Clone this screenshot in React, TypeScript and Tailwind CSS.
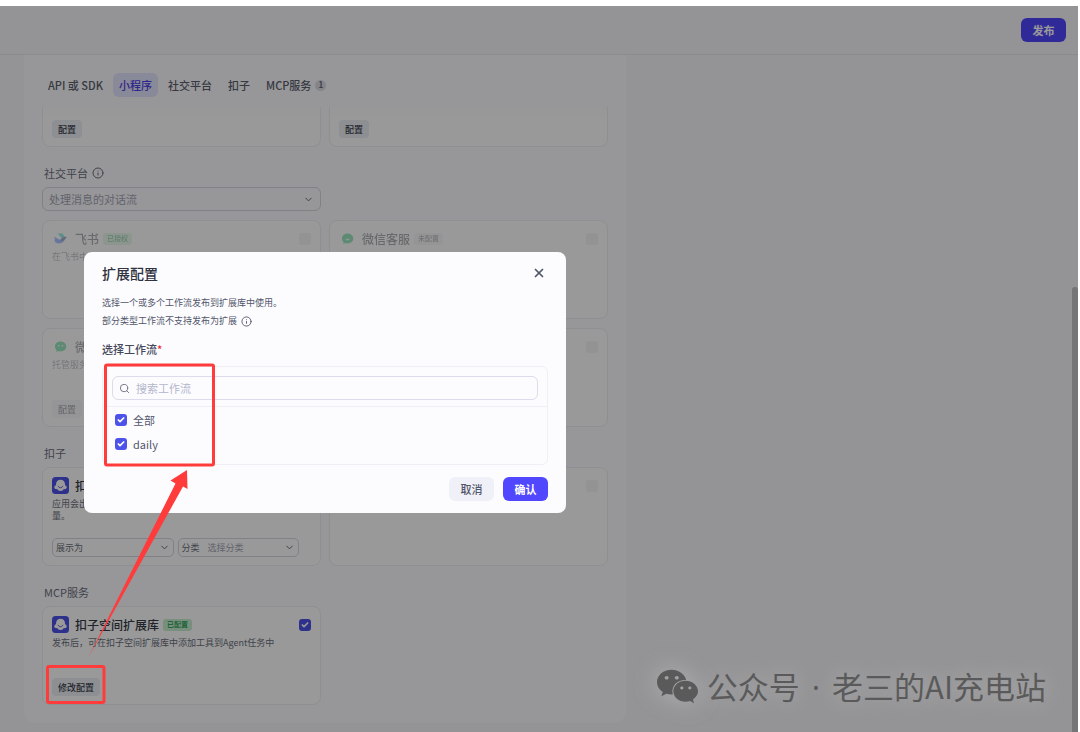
import { useState } from "react";
import type { ReactNode } from "react";
import { Check, ChevronDown, Info, Search, X } from "lucide-react";
import { FaWeixin } from "react-icons/fa";
import clsx from "clsx";

const TABS = [
  { id: "api", label: "API 或 SDK" },
  { id: "mini", label: "小程序" },
  { id: "social", label: "社交平台" },
  { id: "coze", label: "扣子" },
  { id: "mcp", label: "MCP服务", count: 1 },
];

const WORKFLOWS = ["daily"];

function CozeLogo() {
  return (
    <svg viewBox="0 0 34 34" className="size-[17px] shrink-0" aria-hidden="true">
      <rect width="34" height="34" rx="7" fill="#4d53e8" />
      <g fill="#fff">
        <path d="M17 5.500c-5.200 0-9 3.900-9 9V21h18v-6.500c0-5.100-3.800-9-9-9z" />
        <circle cx="8.500" cy="20.500" r="3.800" />
        <circle cx="25.500" cy="20.500" r="3.800" />
        <ellipse cx="17" cy="22.500" rx="6.500" ry="5.500" />
      </g>
      <path d="M12.500 18.500c1.500 4.200 7.500 4.200 9 0" fill="none" stroke="#4d53e8" strokeWidth="2" strokeLinecap="round" />
    </svg>
  );
}

function FeishuLogo() {
  return (
    <svg viewBox="0 0 34 34" className="size-[17px] shrink-0" aria-hidden="true">
      <path d="M11 7h10c2 2 3.400 4.500 4 7.500-2 .6-4 1.700-5.500 3.300C17 13.500 14.500 10 11 7z" fill="#00d6b9" />
      <path d="M5.500 13v10.500c5.500 5 15.500 5 20.500-5C18.500 22 12 19.500 5.500 13z" fill="#3370ff" />
      <path d="M29.500 14.200c-3.800-1.200-7.300-.2-10 2.700l-4 3.700C20 22.800 24 21.500 26 18.500z" fill="#133c9a" />
    </svg>
  );
}

function ServiceLogo({ smile = false }: { smile?: boolean }) {
  return (
    <svg viewBox="0 0 34 34" className="size-[17px] shrink-0" aria-hidden="true">
      <path d="M17 7C10.500 7 6 11.300 6 17c0 3 1.300 5.500 3.200 7.200L8.500 28l4-2c1.400.5 3 .8 4.500.8 6.500 0 11.500-4.100 11.500-9.800S23.500 7 17 7z" fill="#07c160" />
      {smile ? (
        <path d="M13.500 18.500c1.800 2 5.200 2 7 0z" fill="#fff" stroke="#fff" strokeWidth="1.500" strokeLinejoin="round" />
      ) : (
        <>
          <circle cx="13.500" cy="15.500" r="1.700" fill="#fff" />
          <circle cx="21" cy="15.500" r="1.700" fill="#fff" />
        </>
      )}
    </svg>
  );
}

interface TickProps {
  label: string;
  checked?: boolean;
  disabled?: boolean;
  onChange?: (checked: boolean) => void;
}

function Tick({ label, checked = false, disabled = false, onChange }: TickProps) {
  return (
    <span className="grid size-3 shrink-0">
      <input
        type="checkbox"
        aria-label={label}
        checked={checked}
        disabled={disabled}
        onChange={e => onChange?.(e.target.checked)}
        className="peer col-start-1 row-start-1 size-3 appearance-none rounded-[3px] bg-[#e6e6eb] checked:bg-[#4d53e8]"
      />
      <Check
        size={8}
        strokeWidth={5}
        className="pointer-events-none invisible col-start-1 row-start-1 place-self-center text-white peer-checked:visible"
      />
    </span>
  );
}

function Tag({ tone, children }: { tone: "green" | "gray"; children: ReactNode }) {
  return (
    <span
      className={clsx(
        "flex h-3 items-center rounded-[3px] px-1 text-[7px] font-medium whitespace-nowrap",
        tone === "green" ? "bg-[#c9efd3] text-[#159a4a]" : "bg-[#f0f0f5] text-[#5b5f6e]"
      )}
    >
      {children}
    </span>
  );
}

function SmallButton({ children, disabled }: { children: ReactNode; disabled?: boolean }) {
  return (
    <button
      type="button"
      disabled={disabled}
      className="h-[18px] rounded-sm bg-[#eceef6] px-1.5 text-[9px] leading-none font-medium text-[#383b48]"
    >
      {children}
    </button>
  );
}

interface DropdownProps {
  label: string;
  prefix?: string;
  text: string;
  muted?: boolean;
  large?: boolean;
}

function Dropdown({ label, prefix, text, muted, large }: DropdownProps) {
  return (
    <label
      className={clsx(
        "flex w-full min-w-0 items-center border border-[#d6d7e2] text-[#6b6f7d]",
        large ? "h-6 rounded-md px-1.5 text-[11px]" : "h-[19px] rounded-[5px] px-[3px] text-[9px]"
      )}
    >
      {prefix && <span className="mr-2 shrink-0">{prefix}</span>}
      <select
        aria-label={label}
        className={clsx("w-0 min-w-0 flex-1 appearance-none bg-transparent leading-none outline-none", muted && "text-[#a3a6b5]")}
      >
        <option>{text}</option>
      </select>
      <ChevronDown size={11} className="shrink-0 text-[#5b5f6e]" />
    </label>
  );
}

interface ChannelCardProps {
  icon?: ReactNode;
  title: string;
  tag?: ReactNode;
  desc?: ReactNode;
  checked?: boolean;
  disabled?: boolean;
  onCheck?: (checked: boolean) => void;
  children?: ReactNode;
}

function ChannelCard({ icon, title, tag, desc, checked, disabled, onCheck, children }: ChannelCardProps) {
  return (
    <article className="h-[99px] min-w-0 rounded-lg border border-[#efeff5] bg-white">
      <div className={clsx("flex h-full flex-col px-[9px] pt-[9px] pb-2", disabled && "opacity-40")}>
        <div className="flex items-center">
          {icon}
          <h3 className="mr-1 ml-1.5 text-[12px] leading-[17px] font-medium whitespace-nowrap text-[#383b48]">{title}</h3>
          {tag}
          <span className="ml-auto flex">
            <Tick label={title} checked={checked} disabled={disabled} onChange={onCheck} />
          </span>
        </div>
        <p className="mt-1 text-[9px] leading-3 whitespace-nowrap text-[#6b6f7d]">{desc}</p>
        <div className="mt-auto">{children}</div>
      </div>
    </article>
  );
}

function SectionLabel({ children }: { children: ReactNode }) {
  return <h2 className="flex h-10 items-center gap-1 px-0.5 pt-3 text-[11px] text-[#6b6f7d]">{children}</h2>;
}

function PublishPanel() {
  const [tab, setTab] = useState("mini");
  const [mcp, setMcp] = useState(true);

  return (
    <section className="ml-6 w-full max-w-[602px] rounded-b-xl bg-[#fcfcff] px-[18px] pt-[18px] pb-[18px]">
      <nav className="flex h-6 items-center text-[11px] font-medium text-[#5b5f6e]">
        {TABS.map(t => (
          <button
            key={t.id}
            type="button"
            onClick={() => setTab(t.id)}
            className={clsx(
              "mr-1 flex h-6 items-center gap-1 rounded-md px-1.5 whitespace-nowrap",
              tab === t.id && "bg-[#e3e4ff] text-[#4e40e5]"
            )}
          >
            {t.label}
            {t.count && (
              <span className="flex size-[11px] items-center justify-center rounded-full bg-[#dcdde8] text-[9px]">{t.count}</span>
            )}
          </button>
        ))}
      </nav>

      <div className="mt-2.5 grid grid-cols-2 gap-2">
        {[0, 1].map(n => (
          <div
            key={n}
            className="flex h-10 items-end rounded-b-lg border border-t-0 border-[#efeff5] bg-linear-to-b from-[#fcfcff] to-white to-30% px-[9px] pb-2"
          >
            <SmallButton>配置</SmallButton>
          </div>
        ))}
      </div>

      <SectionLabel>
        社交平台 <Info size={12} />
      </SectionLabel>
      <div className="grid grid-cols-2 gap-2">
        <Dropdown large muted label="处理消息的对话流" text="处理消息的对话流" />
      </div>
      <div className="mt-[9px] grid grid-cols-2 gap-x-2 gap-y-[9px]">
        <ChannelCard disabled icon={<FeishuLogo />} title="飞书" tag={<Tag tone="green">已授权</Tag>} desc="在飞书中使用" />
        <ChannelCard disabled icon={<ServiceLogo smile />} title="微信客服" tag={<Tag tone="gray">未配置</Tag>} />
        <ChannelCard disabled icon={<ServiceLogo />} title="微信服务号" desc="托管服务号消息">
          <SmallButton disabled>配置</SmallButton>
        </ChannelCard>
        <ChannelCard disabled title="微信订阅号" />
      </div>

      <SectionLabel>扣子</SectionLabel>
      <div className="grid grid-cols-2 gap-2">
        <ChannelCard
          icon={<CozeLogo />}
          title="扣子商店"
          desc={
            <>
              应用会出现在扣子商店中
              <br />
              量。
            </>
          }
        >
          <div className="mr-3 flex gap-1">
            <Dropdown label="展示为" text="展示为" />
            <Dropdown label="分类" prefix="分类" text="选择分类" muted />
          </div>
        </ChannelCard>
        <ChannelCard disabled title="模板" />
      </div>

      <SectionLabel>MCP服务</SectionLabel>
      <div className="grid grid-cols-2 gap-2">
        <ChannelCard
          icon={<CozeLogo />}
          title="扣子空间扩展库"
          tag={<Tag tone="green">已配置</Tag>}
          desc="发布后，可在扣子空间扩展库中添加工具到Agent任务中"
          checked={mcp}
          onCheck={setMcp}
        >
          <SmallButton>修改配置</SmallButton>
        </ChannelCard>
      </div>
    </section>
  );
}

function ExtensionDialog() {
  const [selected, setSelected] = useState<string[]>(WORKFLOWS);
  const [query, setQuery] = useState("");

  const toggle = (name: string, on: boolean) =>
    setSelected(prev => (on ? [...prev, name] : prev.filter(n => n !== name)));

  return (
    <div
      role="dialog"
      aria-label="扩展配置"
      className="w-full max-w-[482px] rounded-lg bg-[#fcfcff] px-[18px] pt-3 pb-3 text-[#52566a]"
    >
      <div className="flex h-[18px] items-center justify-between">
        <h2 className="text-[14px] leading-[18px] font-medium text-[#2f3240]">扩展配置</h2>
        <button type="button" aria-label="关闭" className="mr-0.5 text-[#52566a]">
          <X size={14} strokeWidth={3} />
        </button>
      </div>

      <div className="mt-3 text-[9px] leading-[18px]">
        <p>选择一个或多个工作流发布到扩展库中使用。</p>
        <p className="flex items-center gap-1">
          部分类型工作流不支持发布为扩展 <Info size={11} />
        </p>
      </div>

      <h3 className="mt-2.5 flex text-[11px] leading-[18px] font-medium text-[#45485a]">
        选择工作流<span className="text-[#f22435]">*</span>
      </h3>

      <div className="mt-2 rounded-md border border-[#efeff5]">
        <div className="border-b border-[#efeff5] px-[9px] pt-[9px] pb-1.5">
          <label className="flex h-6 items-center gap-1.5 rounded-md border border-[#dcdcec] px-1.5">
            <Search size={11} className="shrink-0 text-[#6b6f7d]" />
            <input
              type="text"
              aria-label="搜索工作流"
              placeholder="搜索工作流"
              value={query}
              onChange={e => setQuery(e.target.value)}
              className="w-full min-w-0 bg-transparent text-[11px] outline-none placeholder:text-[#b4b6cc]"
            />
          </label>
        </div>
        <div className="flex flex-col px-3 pt-px pb-2 text-[11px] leading-6">
          <label className="flex h-6 items-center gap-1.5">
            <Tick
              label="全部"
              checked={selected.length === WORKFLOWS.length}
              onChange={on => setSelected(on ? WORKFLOWS : [])}
            />
            全部
          </label>
          {WORKFLOWS.map(name => (
            <label key={name} className="flex h-6 items-center gap-1.5">
              <Tick label={name} checked={selected.includes(name)} onChange={on => toggle(name, on)} />
              {name}
            </label>
          ))}
        </div>
      </div>

      <div className="mt-3 flex justify-end gap-[9px] text-[11px] font-medium">
        <button type="button" className="h-6 w-[45px] rounded-md bg-[#f0f0f9]">取消</button>
        <button type="button" className="h-6 w-[45px] rounded-md bg-[#5147ff] font-bold text-white">确认</button>
      </div>
    </div>
  );
}

// red boxes and the arrow drawn over the page
function Annotations() {
  return (
    <svg
      viewBox="0 0 320 732"
      className="pointer-events-none absolute top-0 left-0 h-[732px] w-80"
      fill="none"
      stroke="#ff3b3b"
      strokeWidth="3"
      aria-hidden="true"
    >
      <rect x="105.500" y="365" width="108" height="100" rx="1.500" />
      <rect x="47.500" y="666.500" width="56.500" height="36" rx="1.500" />
      <path d="M88 658L175.500 483.500L170.500 480.500L187 470L187.500 489L183 486.500Z" fill="#ff3b3b" stroke="none" />
    </svg>
  );
}

export default function App() {
  return (
    <div className="relative min-h-screen bg-white pt-1.5 pr-0.5 font-['Noto_Sans_CJK_SC','Noto_Sans',sans-serif]">
      <div className="relative flex min-h-[calc(100vh-6px)] flex-col bg-[#f7f7fa]">
        <header className="flex h-[49px] items-center justify-end border-b border-[#e8e8ee] px-3">
          <button type="button" className="h-6 w-[45px] rounded-md bg-[#5147ff] text-[11px] font-bold text-white">
            发布
          </button>
        </header>
        <main className="flex">
          <PublishPanel />
        </main>

        <div className="absolute inset-0 bg-black/40 pt-[246px] pl-[84px]">
          <ExtensionDialog />
        </div>
        <div className="absolute right-0 bottom-0 h-[445px] w-1.5 rounded-t-full bg-[#757577]" />
        <div className="absolute right-8 bottom-6 flex items-center gap-2 text-[#5a5a5b]">
          <FaWeixin size={43} className="drop-shadow-[0_0_12px_#b4b4b6]" />
          <p className="text-[31px] leading-10 whitespace-nowrap [text-shadow:0_0_20px_#b4b4b6]">
            公众号<span className="mx-3 font-['Noto_Sans']">·</span>老三的AI充电站
          </p>
        </div>
      </div>
      <Annotations />
    </div>
  );
}
